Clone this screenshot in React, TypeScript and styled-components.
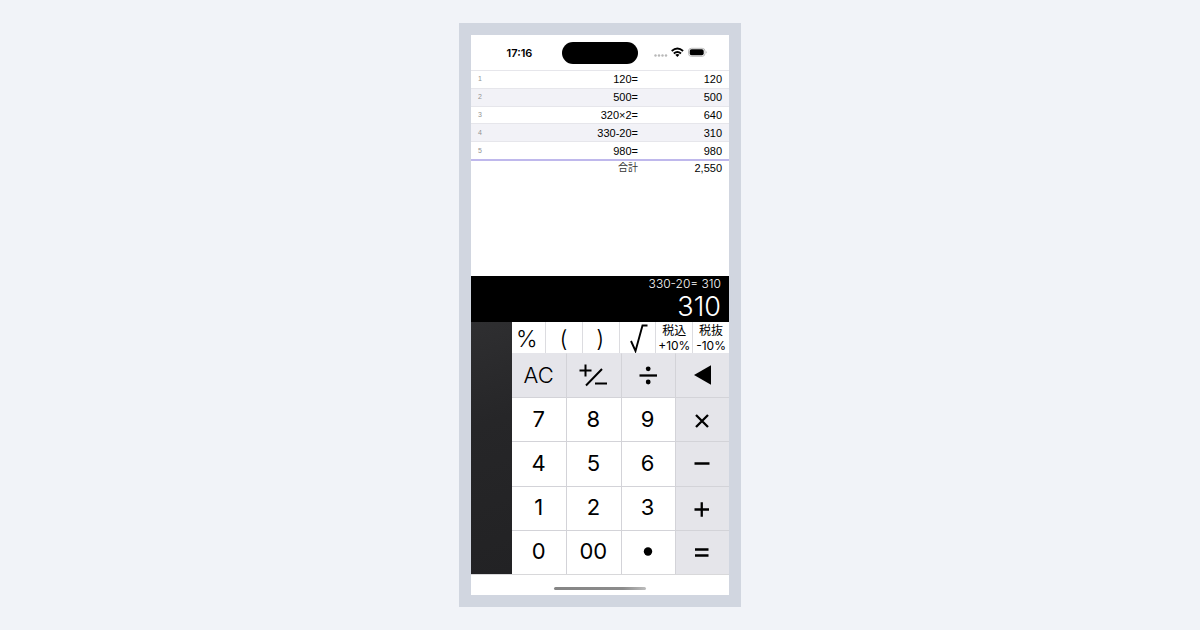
import React from "react";
import styled, { createGlobalStyle } from "styled-components";

const GlobalStyle = createGlobalStyle`
  * { box-sizing: border-box; }
  body {
    margin: 0;
    background: #f1f3f8;
    color: #000;
    font-family: Inter, "Noto Sans CJK JP", sans-serif;
  }
`;

const Page = styled.main`
  min-height: 100vh;
  display: flex;
  align-items: center;
  justify-content: center;
`;

const Frame = styled.div`
  width: 100%;
  max-width: 282px;
  padding: 12px;
  background: #d1d6e0;
`;

const Screen = styled.div`
  display: flex;
  flex-direction: column;
  background: #fff;
`;

const StatusBar = styled.header`
  display: grid;
  grid-template-columns: 1fr 76px 1fr;
  align-items: center;
  height: 35px;
`;

const Clock = styled.time`
  padding-left: 6px;
  text-align: center;
  font-size: 11px;
  line-height: 16px;
  font-weight: 600;
`;

const Island = styled.div`
  height: 22px;
  border-radius: 11px;
  background: #000;
`;

const StatusIcons = styled.svg`
  display: block;
  width: 54px;
  height: 12px;
  justify-self: end;
  margin-right: 22px;
`;

const Tape = styled.section`
  min-height: 206px;
`;

const TapeTable = styled.table`
  width: 100%;
  height: 105px;
  table-layout: fixed;
  border-collapse: separate;
  border-spacing: 0;
  font-family: "Liberation Sans", "Noto Sans CJK JP", sans-serif;
  font-size: 11px;
  line-height: 16px;
`;

const TapeRow = styled.tr<{ $shaded: boolean }>`
  background: ${(p) => (p.$shaded ? "#f2f2f7" : "#fff")};
`;

const TapeCell = styled.td`
  padding: 0;
  border-top: 1px solid #e6e6eb;
  text-align: right;
`;

const RowNumber = styled.th`
  padding: 0 0 0 7px;
  border-top: 1px solid #e6e6eb;
  text-align: left;
  font-size: 7px;
  font-weight: 400;
  color: #929292;
`;

const Amount = styled(TapeCell)`
  padding-right: 7px;
`;

const NumberColumn = styled.col`
  width: 24px;
`;

const AmountColumn = styled.col`
  width: 91px;
`;

const TotalLabel = styled.th`
  padding: 0;
  border-top: 2px solid #bfb8ec;
  text-align: right;
  font-size: 10px;
  line-height: 14px;
  font-weight: 400;
  color: #333;
`;

const TotalAmount = styled.td`
  padding: 0 7px 0 0;
  border-top: 2px solid #bfb8ec;
  text-align: right;
  line-height: 14px;
`;

const Display = styled.output`
  display: flex;
  flex-direction: column;
  align-items: flex-end;
  height: 46px;
  padding-right: 8px;
  background: #000;
  color: #fff;
`;

const Expression = styled.span`
  font-size: 12px;
  line-height: 16px;
  font-weight: 300;
`;

const Result = styled.span`
  font-size: 27px;
  line-height: 30px;
  font-weight: 300;
`;

const Keyboard = styled.section`
  display: grid;
  grid-template-columns: 41px 1fr;
  border-bottom: 1px solid #d8d8da;
`;

const SideRail = styled.div`
  background: linear-gradient(160deg, #2f2f31, #262628 40%, #222224);
`;

const FunctionRow = styled.div`
  display: grid;
  grid-template-columns: 33px repeat(5, 1fr);
  height: 31px;
`;

const FunctionKey = styled.button<{ $small?: boolean }>`
  display: flex;
  flex-direction: column;
  align-items: center;
  justify-content: center;
  padding: ${(p) => (p.$small ? "0" : "2px 1px 0 0")};
  border: 0;
  border-left: 1px solid #dcdce0;
  background: #fff;
  color: #000;
  font-family: inherit;
  font-size: ${(p) => (p.$small ? "12px" : "23px")};
  line-height: ${(p) => (p.$small ? "15px" : "29px")};
  font-weight: ${(p) => (p.$small ? 400 : 300)};
  white-space: nowrap;

  &:first-child {
    border-left: 0;
    align-items: flex-start;
    padding-left: 4px;
  }
`;

const KeyGrid = styled.div`
  display: grid;
  grid-template-columns: repeat(4, 1fr);
  grid-template-rows: repeat(5, 1fr);
  height: 221px;
`;

const Key = styled.button<{ $tinted?: boolean }>`
  display: flex;
  align-items: center;
  justify-content: center;
  padding: 0 1px 2px 0;
  border: 0;
  border-left: 1px solid #d3d3d8;
  border-top: 1px solid #d3d3d8;
  background: ${(p) => (p.$tinted ? "#e5e5ea" : "#fff")};
  color: #000;
  font-family: inherit;
  font-size: 22px;
  line-height: 30px;
  font-weight: ${(p) => (p.$tinted ? 300 : 400)};

  &:nth-child(4n + 1) { border-left: 0; }
  &:nth-child(-n + 4) { border-top-color: #e5e5ea; }
`;

const Glyph = styled.svg`
  display: block;
  width: 30px;
  height: 30px;
  fill: none;
  stroke: #000;
  stroke-width: 2;
`;

const HomeArea = styled.footer`
  display: flex;
  justify-content: center;
  height: 20px;
  padding-top: 12px;
`;

const HomeIndicator = styled.div`
  width: 92px;
  height: 3px;
  border-radius: 2px;
  background: linear-gradient(90deg, #858585, #8c8c8c 75%, #bdbdbd);
`;

const entries = [
  { expression: "120=", amount: "120" },
  { expression: "500=", amount: "500" },
  { expression: "320×2=", amount: "640" },
  { expression: "330-20=", amount: "310" },
  { expression: "980=", amount: "980" },
];

type KeySpec = { label: string; glyph?: React.ReactNode; tinted?: boolean };

const keys: KeySpec[] = [
  { label: "AC", tinted: true },
  {
    label: "Plus minus",
    tinted: true,
    glyph: <path d="M1.5 10.5h12M7.500 4.500v12M8 25.500L24 9M17 23.500h12" />,
  },
  {
    label: "Divide",
    tinted: true,
    glyph: (
      <>
        <path d="M6.500 15.500h17.500" strokeWidth="2.300" />
        <circle cx="15.200" cy="8.800" r="2.400" fill="#000" stroke="none" />
        <circle cx="15.200" cy="22" r="2.400" fill="#000" stroke="none" />
      </>
    ),
  },
  { label: "Delete", tinted: true, glyph: <path d="M7 15L24 5.200V24.800z" fill="#000" stroke="none" /> },
  { label: "7" },
  { label: "8" },
  { label: "9" },
  { label: "Multiply", tinted: true, glyph: <path d="M9 11l12 12M21 11L9 23" strokeWidth="2.300" /> },
  { label: "4" },
  { label: "5" },
  { label: "6" },
  { label: "Minus", tinted: true, glyph: <path d="M7.500 15.500h15" strokeWidth="2.500" /> },
  { label: "1" },
  { label: "2" },
  { label: "3" },
  { label: "Plus", tinted: true, glyph: <path d="M7.500 17.500h14.500M14.750 10.200v14.600" strokeWidth="2.300" /> },
  { label: "0" },
  { label: "00" },
  { label: "Decimal point", glyph: <circle cx="15" cy="15.500" r="4.200" fill="#000" stroke="none" /> },
  { label: "Equals", tinted: true, glyph: <path d="M8 13.500h13.500M8 19.500h13.500" strokeWidth="2.300" /> },
];

export default function App() {
  return (
    <Page>
      <GlobalStyle />
      <Frame>
        <Screen>
          <StatusBar>
            <Clock>17:16</Clock>
            <Island />
            <StatusIcons viewBox="0 0 54 12" aria-hidden="true">
              <g fill="#b8b8b8">
                <circle cx="2.500" cy="8.500" r="1.200" />
                <circle cx="6" cy="8.500" r="1.200" />
                <circle cx="9.500" cy="8.500" r="1.200" />
                <circle cx="13" cy="8.500" r="1.200" />
              </g>
              <g fill="none" stroke="#000" strokeWidth="1.900">
                <path d="M18.700 3.900Q24.400 -0.700 30.100 3.900" />
                <path d="M20.800 6.400Q24.400 3.400 28 6.400" />
              </g>
              <path d="M22.300 7.800Q24.400 6.400 26.500 7.800L24.400 10z" />
              <rect x="35.500" y="1.300" width="16.500" height="8" rx="2.800" fill="#fff" stroke="#bbb" />
              <rect x="36.700" y="2.300" width="14" height="6" rx="1.800" />
              <path d="M53 4q1.200 1.300 0 2.600z" fill="#aaa" />
            </StatusIcons>
          </StatusBar>

          <Tape>
            <TapeTable>
              <colgroup>
                <NumberColumn />
                <col />
                <AmountColumn />
              </colgroup>
              <tbody>
                {entries.map((entry, i) => (
                  <TapeRow key={i} $shaded={i % 2 === 1}>
                    <RowNumber scope="row">{i + 1}</RowNumber>
                    <TapeCell>{entry.expression}</TapeCell>
                    <Amount>{entry.amount}</Amount>
                  </TapeRow>
                ))}
              </tbody>
              <tfoot>
                <tr>
                  <TotalLabel scope="row" colSpan={2}>合計</TotalLabel>
                  <TotalAmount>2,550</TotalAmount>
                </tr>
              </tfoot>
            </TapeTable>
          </Tape>

          <Display>
            <Expression>330-20= 310</Expression>
            <Result>310</Result>
          </Display>

          <Keyboard>
            <SideRail />
            <div>
              <FunctionRow>
                <FunctionKey type="button">%</FunctionKey>
                <FunctionKey type="button">(</FunctionKey>
                <FunctionKey type="button">)</FunctionKey>
                <FunctionKey type="button" aria-label="Square root">
                  <Glyph viewBox="0 0 30 30">
                    <path d="M9 17L13.500 27L20.500 1.500H25.500" strokeWidth="1.900" />
                  </Glyph>
                </FunctionKey>
                <FunctionKey type="button" $small>
                  <span>税込</span>
                  <span>+10%</span>
                </FunctionKey>
                <FunctionKey type="button" $small>
                  <span>税抜</span>
                  <span>-10%</span>
                </FunctionKey>
              </FunctionRow>
              <KeyGrid>
                {keys.map((key) => (
                  <Key key={key.label} type="button" $tinted={key.tinted} aria-label={key.label}>
                    {key.glyph ? <Glyph viewBox="0 0 30 30">{key.glyph}</Glyph> : key.label}
                  </Key>
                ))}
              </KeyGrid>
            </div>
          </Keyboard>

          <HomeArea>
            <HomeIndicator />
          </HomeArea>
        </Screen>
      </Frame>
    </Page>
  );
}
